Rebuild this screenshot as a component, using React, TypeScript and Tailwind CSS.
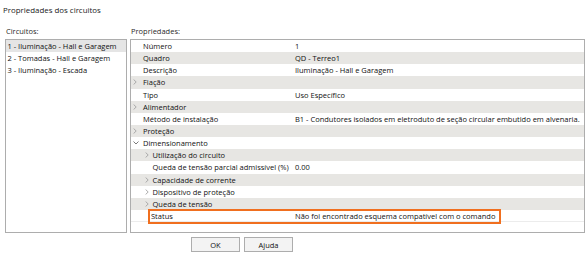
import React from 'react';

type Row = {
  label: string;
  value?: string;
  depth: 0 | 1;
  arrow?: 'right' | 'down';
};

const rows: Row[] = [
  { label: 'Número', value: '1', depth: 0 },
  { label: 'Quadro', value: 'QD - Terreo1', depth: 0 },
  { label: 'Descrição', value: 'Iluminação - Hall e Garagem', depth: 0 },
  { label: 'Fiação', depth: 0, arrow: 'right' },
  { label: 'Tipo', value: 'Uso Específico', depth: 0 },
  { label: 'Alimentador', depth: 0, arrow: 'right' },
  {
    label: 'Método de instalação',
    value: 'B1 - Condutores isolados em eletroduto de seção circular embutido em alvenaria.',
    depth: 0,
  },
  { label: 'Proteção', depth: 0, arrow: 'right' },
  { label: 'Dimensionamento', depth: 0, arrow: 'down' },
  { label: 'Utilização do circuito', depth: 1, arrow: 'right' },
  { label: 'Queda de tensão parcial admissível (%)', value: '0.00', depth: 1 },
  { label: 'Capacidade de corrente', depth: 1, arrow: 'right' },
  { label: 'Dispositivo de proteção', depth: 1, arrow: 'right' },
  { label: 'Queda de tensão', depth: 1, arrow: 'right' },
];

const circuits = ['1 - Iluminação - Hall e Garagem', '2 - Tomadas - Hall e Garagem', '3 - Iluminação - Escada'];

function Chevron({ dir }: { dir: 'right' | 'down' }) {
  if (dir === 'down') {
    return (
      <svg width="6" height="4" viewBox="0 0 6 4" className="block">
        <path d="M0.5 0.5 L3 3 L5.5 0.5" fill="none" stroke="#6b6b6b" strokeWidth="0.9" />
      </svg>
    );
  }
  return (
    <svg width="4" height="6" viewBox="0 0 4 6" className="block">
      <path d="M0.6 0.5 L3.2 3 L0.6 5.5" fill="none" stroke="#a3a3a3" strokeWidth="0.9" />
    </svg>
  );
}

function PropRow({ row, index }: { row: Row; index: number }) {
  return (
    <div className={`flex h-[12.15px] items-center ${index % 2 === 1 ? 'bg-[#e7e6e3]' : 'bg-white'}`}>
      <div className={`flex w-[161px] items-center ${row.depth === 0 ? 'pl-[2px]' : 'pl-[14px]'}`}>
        <div className={`flex items-center ${row.depth === 0 ? 'w-[10px]' : 'w-[7.5px]'}`}>
          {row.arrow && <Chevron dir={row.arrow} />}
        </div>
        <span className="whitespace-nowrap">{row.label}</span>
      </div>
      <div className="flex-1 whitespace-nowrap pl-[3px]">{row.value}</div>
    </div>
  );
}

export default function App() {
  return (
    <div className="relative h-[254px] w-[587px] overflow-hidden bg-white font-['Open_Sans',sans-serif] text-[7.5px] leading-[12px] text-[#111]">
      {/* title */}
      <div className="mt-[4px] h-[12px] pl-[3px] text-[7.9px] text-[#1a1a1a]">Propriedades dos circuitos</div>

      <div className="mt-[9px] flex pl-[5px]">
        {/* circuitos */}
        <div className="flex w-[122px] flex-col">
          <div className="h-[12px] pl-[1px] text-[#2a2a2a]">Circuitos:</div>
          <div className="mt-[2px] h-[194px] border border-[#adadad] bg-white">
            {circuits.map((c, i) => (
              <div
                key={c}
                className={`h-[12.15px] whitespace-nowrap pl-[1.5px] ${i === 0 ? 'bg-[#e5e5e5]' : ''}`}
              >
                {c}
              </div>
            ))}
          </div>
        </div>

        {/* propriedades */}
        <div className="ml-[3px] flex w-[455px] flex-col">
          <div className="h-[12px] pl-[1px] text-[#2a2a2a]">Propriedades:</div>
          <div className="mt-[2px] h-[194px] border border-[#adadad] bg-white">
            {rows.map((r, i) => (
              <PropRow key={r.label} row={r} index={i} />
            ))}
            <div className="relative flex h-[12.15px] items-center border-b border-[#ececec] bg-white">
              <div className="w-[161px] pl-[20px]">Status</div>
              <div className="flex-1 whitespace-nowrap pl-[3px]">Não foi encontrado esquema compatível com o comando</div>
              <div className="pointer-events-none absolute top-[-1px] left-[17px] h-[15px] w-[353px] border-2 border-[#f06f1f]" />
            </div>
          </div>
        </div>
      </div>

      {/* buttons */}
      <div className="mt-[4px] flex gap-[4px] pl-[191px]">
        <button className="flex h-[15px] w-[49px] items-center justify-center border border-[#adadad] bg-[#f3f3f3] text-[7.5px]">
          OK
        </button>
        <button className="flex h-[15px] w-[49px] items-center justify-center border border-[#adadad] bg-[#f3f3f3] text-[7.5px]">
          Ajuda
        </button>
      </div>
    </div>
  );
}
